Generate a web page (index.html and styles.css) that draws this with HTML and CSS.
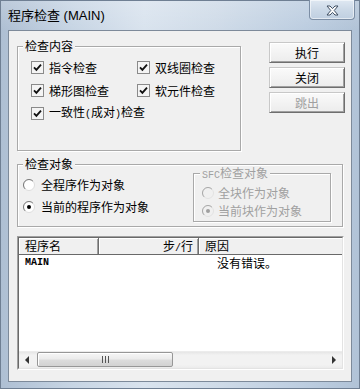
FILE: index.html
```html
<!DOCTYPE html>
<html>
<head>
<meta charset="utf-8">
<link rel="stylesheet" href="styles.css">
</head>
<body>
<div class="window">
  <div class="titlebar">
    <span class="title">程序检查 (MAIN)</span>
    <div class="close">
      <svg width="13" height="11" viewBox="0 0 13 11"><path d="M1 1h3l2.5 2.6L9 1h3L8.2 5.5 12 10H9L6.5 7.4 4 10H1l3.8-4.5z" fill="#fff" stroke="#3f4f63" stroke-width="1" stroke-linejoin="round"/></svg>
    </div>
  </div>
  <div class="client">
    <div class="top">
      <div class="group g1">
        <div class="legend">检查内容</div>
        <div class="checks">
          <div class="opt"><svg class="cb" width="13" height="13" viewBox="0 0 13 13"><rect x=".5" y=".5" width="12" height="12" fill="#f4f4f4" stroke="#8a8a8a"/><path d="M3 6.3l2.4 2.6L10 3.6" fill="none" stroke="#111" stroke-width="1.8"/></svg><span>指令检查</span></div>
          <div class="opt"><svg class="cb" width="13" height="13" viewBox="0 0 13 13"><rect x=".5" y=".5" width="12" height="12" fill="#f4f4f4" stroke="#8a8a8a"/><path d="M3 6.3l2.4 2.6L10 3.6" fill="none" stroke="#111" stroke-width="1.8"/></svg><span>双线圈检查</span></div>
          <div class="opt"><svg class="cb" width="13" height="13" viewBox="0 0 13 13"><rect x=".5" y=".5" width="12" height="12" fill="#f4f4f4" stroke="#8a8a8a"/><path d="M3 6.3l2.4 2.6L10 3.6" fill="none" stroke="#111" stroke-width="1.8"/></svg><span>梯形图检查</span></div>
          <div class="opt"><svg class="cb" width="13" height="13" viewBox="0 0 13 13"><rect x=".5" y=".5" width="12" height="12" fill="#f4f4f4" stroke="#8a8a8a"/><path d="M3 6.3l2.4 2.6L10 3.6" fill="none" stroke="#111" stroke-width="1.8"/></svg><span>软元件检查</span></div>
          <div class="opt wide"><svg class="cb" width="13" height="13" viewBox="0 0 13 13"><rect x=".5" y=".5" width="12" height="12" fill="#f4f4f4" stroke="#8a8a8a"/><path d="M3 6.3l2.4 2.6L10 3.6" fill="none" stroke="#111" stroke-width="1.8"/></svg><span>一致性<span class="m">(</span>成对<span class="m">)</span>检查</span></div>
        </div>
      </div>
      <div class="buttons">
        <div class="btn">执行</div>
        <div class="btn">关闭</div>
        <div class="btn disabled">跳出</div>
      </div>
    </div>

    <div class="group g2">
      <div class="legend">检查对象</div>
      <div class="g2row">
        <div class="radios">
          <div class="ropt"><svg class="rb" width="12" height="12" viewBox="0 0 12 12"><circle cx="6" cy="6" r="5.5" fill="#fff" stroke="#dcdcdc"/><path d="M2.1 9.9A5.5 5.5 0 0 1 9.9 2.1" fill="none" stroke="#7a7a7a"/></svg><span>全程序作为对象</span></div>
          <div class="ropt"><svg class="rb" width="12" height="12" viewBox="0 0 12 12"><circle cx="6" cy="6" r="5.5" fill="#fff" stroke="#dcdcdc"/><path d="M2.1 9.9A5.5 5.5 0 0 1 9.9 2.1" fill="none" stroke="#7a7a7a"/><circle cx="6" cy="6" r="2" fill="#000"/></svg><span>当前的程序作为对象</span></div>
        </div>
        <div class="group sfc">
          <div class="legend dis"><span class="m">SFC</span>检查对象</div>
          <div class="ropt s dis"><svg class="rb" width="12" height="12" viewBox="0 0 12 12"><circle cx="6" cy="6" r="5.5" fill="#f0f0f0" stroke="#e2e2e2"/><path d="M2.1 9.9A5.5 5.5 0 0 1 9.9 2.1" fill="none" stroke="#a8a8a8"/></svg><span>全块作为对象</span></div>
          <div class="ropt s dis"><svg class="rb" width="12" height="12" viewBox="0 0 12 12"><circle cx="6" cy="6" r="5.5" fill="#f0f0f0" stroke="#e2e2e2"/><path d="M2.1 9.9A5.5 5.5 0 0 1 9.9 2.1" fill="none" stroke="#a8a8a8"/><circle cx="6" cy="6" r="2" fill="#a0a0a0"/></svg><span>当前块作为对象</span></div>
        </div>
      </div>
    </div>

    <div class="list">
      <div class="listin">
        <div class="lhead">
          <div class="hc c1">程序名</div>
          <div class="hc c2">步<span class="m">/</span>行</div>
          <div class="hc c3">原因</div>
        </div>
        <div class="lbody">
          <div class="lrow">
            <span class="rc c1 mono">MAIN</span>
            <span class="rc c2"></span>
            <span class="rc c3 reason">没有错误。</span>
          </div>
        </div>
        <div class="hscroll">
          <div class="sbtn"><svg width="5" height="8" viewBox="0 0 5 8"><path d="M4 0v8L0 4z" fill="#333"/></svg></div>
          <div class="thumb"><svg width="7" height="7" viewBox="0 0 7 7"><path d="M.5 0v7M3.5 0v7M6.5 0v7" stroke="#555" stroke-width="1"/></svg></div>
          <div class="track"></div>
          <div class="sbtn"><svg width="5" height="8" viewBox="0 0 5 8"><path d="M1 0v8L5 4z" fill="#333"/></svg></div>
        </div>
      </div>
    </div>
  </div>
</div>
</body>
</html>
```

FILE: styles.css
```css
html, body {
  margin: 0;
  padding: 0;
}
body {
  width: 360px;
  height: 389px;
  overflow: hidden;
  font-family: "Noto Sans CJK SC", sans-serif;
  font-size: 12px;
  color: #000;
}
.window {
  box-sizing: border-box;
  width: 360px;
  height: 389px;
  border: 1px solid #6f7f93;
  display: flex;
  flex-direction: column;
  background:
    linear-gradient(180deg, rgba(255,255,255,0.18), rgba(255,255,255,0) 29px),
    linear-gradient(90deg, #aebfd3 0%, #c7d5e4 20%, #d9e3ee 40%, #cfdbe8 60%, #bccde0 85%, #b1c3d7 100%);
}
.titlebar {
  height: 29px;
  display: flex;
  align-items: flex-start;
}
.title {
  margin: 7px 0 0 7px;
  font-family: "Liberation Sans", "Noto Sans CJK SC", sans-serif;
  font-size: 13px;
  line-height: 16px;
  color: #000;
}
.close {
  margin-left: auto;
  margin-right: 4px;
  margin-top: -1px;
  width: 46px;
  height: 20px;
  box-sizing: border-box;
  border: 1px solid #7c8ea5;
  border-top: none;
  border-radius: 0 0 4px 4px;
  background: linear-gradient(180deg, #dfe8f2 0%, #ccd9e7 50%, #bfcfe1 100%);
  box-shadow: inset 0 0 0 1px rgba(255,255,255,0.55);
  display: flex;
  align-items: center;
  justify-content: center;
  padding-top: 1px;
}
.close svg { display: block; }

.client {
  margin: 0 7px;
  height: 352px;
  box-sizing: border-box;
  border: 1px solid #7d8a9a;
  background: #f0f0f0;
  padding: 15px 0 0 8px;
}
.top {
  display: flex;
  align-items: flex-start;
}
.group {
  box-sizing: border-box;
  border: 1px solid #a9a9a9;
  box-shadow: 1px 1px 0 #fff, inset 1px 1px 0 #fff;
}
.legend {
  width: fit-content;
  margin: -8px 0 0 5px;
  padding: 0 2px;
  background: #f0f0f0;
  line-height: 14px;
  white-space: nowrap;
}
.m {
  font-family: "Liberation Mono", monospace;
  font-size: 10px;
}
.g1 {
  width: 224px;
  height: 105px;
}
.checks {
  display: grid;
  grid-template-columns: 106px auto;
  grid-auto-rows: 23px;
  margin: 3px 0 0 13px;
}
.opt {
  display: flex;
  align-items: center;
  gap: 5px;
  white-space: nowrap;
  line-height: 14px;
}
.opt.wide { grid-column: 1 / 3; }
.cb, .rb { display: block; flex: none; }

.buttons {
  margin-left: 28px;
  margin-top: -4px;
  display: flex;
  flex-direction: column;
  gap: 4px;
}
.btn {
  width: 76px;
  height: 21px;
  box-sizing: border-box;
  border: 1px solid;
  border-color: #c8c8c8 #6e6e6e #6e6e6e #c8c8c8;
  background: linear-gradient(180deg, #fafafa 0%, #ececec 100%);
  box-shadow: inset 1px 1px 0 #fff, inset -1px -1px 0 #a0a0a0;
  display: flex;
  align-items: center;
  justify-content: center;
  line-height: 14px;
}
.btn.disabled { color: #a0a0a0; }

.g2 {
  margin-top: 13px;
  width: 326px;
  height: 63px;
}
.g2row {
  display: flex;
}
.radios {
  flex: 1;
  padding: 3px 0 0 5px;
}
.ropt {
  height: 22px;
  display: flex;
  align-items: center;
  gap: 6px;
  line-height: 14px;
  white-space: nowrap;
}
.sfc {
  width: 138px;
  height: 49px;
  margin: 2px 11px 0 0;
}
.sfc .legend { margin-left: 6px; }
.ropt.s {
  height: 18px;
  padding-left: 8px;
  gap: 4px;
}
.sfc .legend + .ropt { margin-top: 1px; }
.dis { color: #a0a0a0; }

.list {
  margin-top: 9px;
  width: 327px;
  height: 134px;
  box-sizing: border-box;
  border: 1px solid;
  border-color: #a0a0a0 #ffffff #ffffff #a0a0a0;
}
.listin {
  height: 100%;
  box-sizing: border-box;
  border: 1px solid;
  border-color: #696969 #e3e3e3 #e3e3e3 #696969;
  background: #fff;
  display: flex;
  flex-direction: column;
}
.lhead {
  display: flex;
  height: 16px;
  flex: none;
  background: #f0f0f0;
  border-bottom: 1px solid #696969;
}
.hc {
  box-sizing: border-box;
  height: 16px;
  line-height: 15px;
  border-right: 1px solid #6e6e6e;
  box-shadow: inset 1px 1px 0 #fff, inset -1px 0 0 #a0a0a0;
  white-space: nowrap;
}
.c1 { width: 80px; padding-left: 6px; }
.c2 { width: 100px; text-align: right; padding-right: 5px; }
.c3 { flex: 1; padding-left: 6px; border-right: none; box-shadow: inset 1px 1px 0 #fff; }
.lbody {
  flex: 1;
}
.lrow {
  display: flex;
  height: 15px;
  line-height: 15px;
}
.rc { box-sizing: border-box; white-space: nowrap; }
.rc.c3 { box-shadow: none; }
.mono {
  font-family: "Liberation Mono", monospace;
  font-size: 10px;
  font-weight: bold;
}
.reason { padding-left: 18px; }

.hscroll {
  flex: none;
  height: 17px;
  display: flex;
  background: linear-gradient(180deg, #e6e6e6 0%, #f2f2f2 20%, #f2f2f2 80%, #ebebeb 100%);
  border-top: 1px solid #ececec;
  box-sizing: border-box;
}
.sbtn {
  width: 17px;
  display: flex;
  align-items: center;
  justify-content: center;
}
.thumb {
  width: 136px;
  margin: 0 0 1px 1px;
  box-sizing: border-box;
  border: 1px solid #979797;
  border-radius: 2px;
  background: linear-gradient(180deg, #f6f6f6 0%, #ececec 45%, #dcdcdc 55%, #d2d2d2 100%);
  box-shadow: inset 1px 1px 0 #fff;
  display: flex;
  align-items: center;
  justify-content: center;
}
.track { flex: 1; }
```
